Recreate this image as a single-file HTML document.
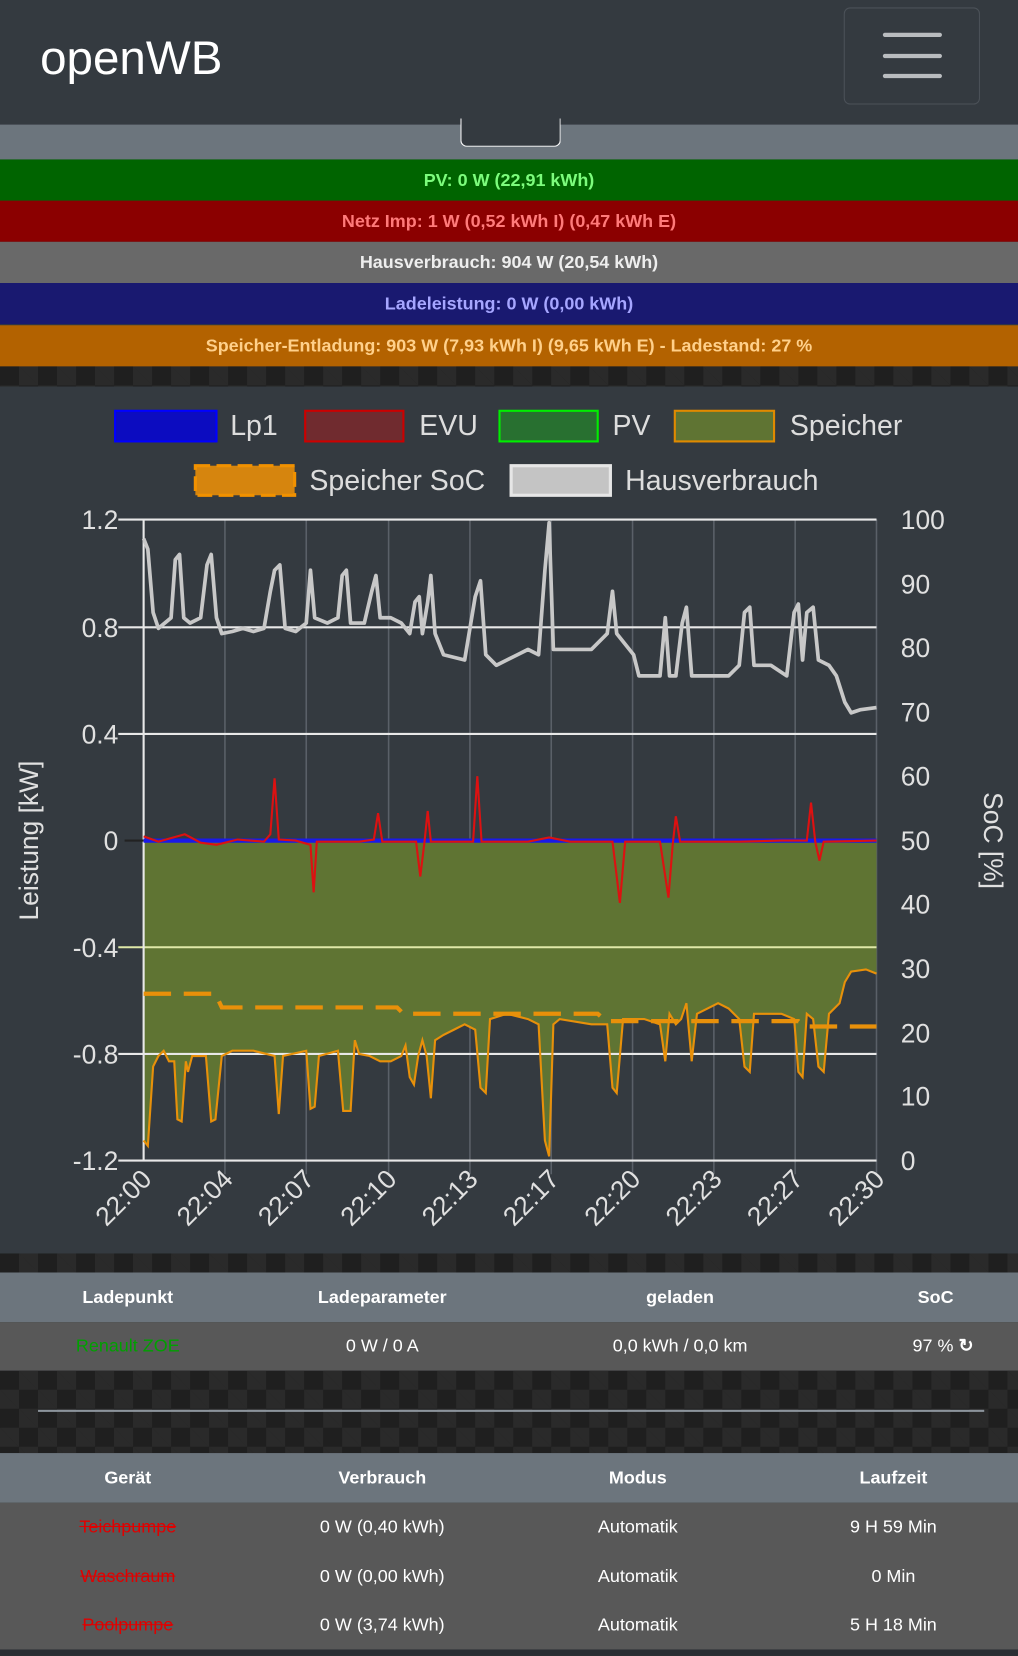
<!DOCTYPE html>
<html><head><meta charset="utf-8">
<style>
html,body{margin:0;padding:0;width:1018px;height:1656px;overflow:hidden;background:#343a40;}
#w{position:absolute;left:0;top:0;width:964px;height:1568px;transform:scale(1.05602);transform-origin:0 0;font-family:"Liberation Sans",sans-serif;}
.abs{position:absolute;left:0;width:964px;}
.bar{position:absolute;left:0;width:964px;text-align:center;font-weight:bold;font-size:17px;line-height:39px;height:39px;}
.carbon{position:absolute;left:0;width:964px;background-color:#1f1f1f;background-image:linear-gradient(45deg,#2a2a2a 25%,transparent 25%,transparent 75%,#2a2a2a 75%),linear-gradient(45deg,#2a2a2a 25%,transparent 25%,transparent 75%,#2a2a2a 75%);background-size:36px 36px;background-position:0 0,18px 18px;}
.row{position:absolute;left:0;width:964px;font-size:17px;color:#fff;}
.row span{position:absolute;transform:translateX(-50%);white-space:nowrap;}
</style></head><body><div id="w">
<div class="abs" style="top:0;height:118px;background:#343a40;"></div>
<div style="position:absolute;left:38px;top:29px;color:#fff;font-size:45px;">openWB</div>
<div style="position:absolute;left:799px;top:7px;width:127px;height:90px;border:1.5px solid #4b5158;border-radius:6px;"></div>
<div style="position:absolute;left:836px;top:31px;width:56px;height:4px;background:#b9bcbf;border-radius:2px;"></div>
<div style="position:absolute;left:836px;top:51px;width:56px;height:4px;background:#b9bcbf;border-radius:2px;"></div>
<div style="position:absolute;left:836px;top:70px;width:56px;height:4px;background:#b9bcbf;border-radius:2px;"></div>
<div class="abs" style="top:118px;height:33px;background:#6c757d;"></div>
<div style="position:absolute;left:436px;top:112px;width:93px;height:26px;background:#343a40;border:1.5px solid #fff;border-top:none;border-radius:0 0 6px 6px;"></div>
<div class="bar" style="top:151px;background:#006400;color:#7cfc7c;">PV: 0 W (22,91 kWh)</div>
<div class="bar" style="top:190px;background:#8b0000;color:#ff7a7a;">Netz Imp: 1 W (0,52 kWh I) (0,47 kWh E)</div>
<div class="bar" style="top:229px;background:#696969;color:#eee;">Hausverbrauch: 904 W (20,54 kWh)</div>
<div class="bar" style="top:268px;background:#191970;color:#a6a6ff;">Ladeleistung: 0 W (0,00 kWh)</div>
<div class="bar" style="top:308px;background:#b36200;color:#ffd08a;height:39px;">Speicher-Entladung: 903 W (7,93 kWh I) (9,65 kWh E) - Ladestand: 27 %</div>
<div class="carbon" style="top:347px;height:19px;"></div>
<svg style="position:absolute;left:0;top:0" width="964" height="1568" font-family="Liberation Sans, sans-serif">
<rect x="0" y="366" width="964" height="821" fill="#343a40"/>
<g font-size="27" fill="#ddd">
<rect x="109" y="389" width="96" height="29" fill="#0c0cc0" stroke="#0000ff" stroke-width="2"/><text x="218" y="412">Lp1</text>
<rect x="289" y="389" width="93" height="29" fill="#702b2f" stroke="#cc0000" stroke-width="2"/><text x="397" y="412">EVU</text>
<rect x="473" y="389" width="93" height="29" fill="#287030" stroke="#00ee00" stroke-width="2"/><text x="580" y="412">PV</text>
<rect x="639" y="389" width="94" height="29" fill="#5f7433" stroke="#e08a00" stroke-width="2"/><text x="748" y="412">Speicher</text>
<rect x="185" y="441" width="94" height="28" fill="#d6850e" stroke="#f19100" stroke-width="3" stroke-dasharray="14 6"/><text x="293" y="464">Speicher SoC</text>
<rect x="484" y="441" width="94" height="28" fill="#c4c4c4" stroke="#e6e6e6" stroke-width="3"/><text x="592" y="464">Hausverbrauch</text>
</g>
<g stroke="#5a6068" stroke-width="1.5">
<line x1="213" y1="492" x2="213" y2="1112"/><line x1="290" y1="492" x2="290" y2="1112"/><line x1="368" y1="492" x2="368" y2="1112"/><line x1="445" y1="492" x2="445" y2="1112"/><line x1="522" y1="492" x2="522" y2="1112"/><line x1="599" y1="492" x2="599" y2="1112"/><line x1="676" y1="492" x2="676" y2="1112"/><line x1="753" y1="492" x2="753" y2="1112"/><line x1="830" y1="492" x2="830" y2="1112"/>
</g>
<polygon fill="#5f7433" points="136,796 136,1080 140,1085 145,1010 150,1000 155,995 160,1005 165,1005 168,1060 172,1062 176,1005 178,1015 182,1000 195,1000 200,1062 204,1060 210,1000 220,995 240,995 260,1000 264,1055 268,1000 290,995 294,1050 298,1048 302,1000 320,995 325,1052 332,1052 336,985 340,998 350,1000 360,1005 370,1005 380,1000 384,990 388,1020 392,1027 396,1000 400,985 404,1000 408,1040 412,985 420,980 430,975 440,970 450,975 455,1030 460,1035 464,965 480,960 500,965 510,970 516,1080 520,1095 524,970 530,965 560,970 575,970 580,1030 584,1035 590,965 610,965 625,970 630,1005 634,960 640,970 645,965 650,950 655,1005 660,960 680,950 690,955 700,965 705,1010 710,1015 714,960 740,960 752,965 756,1015 760,1020 764,960 770,965 775,1010 780,1015 785,960 795,950 800,930 806,920 820,918 830,922 830,796"/>
<g stroke="#e8e8e8" stroke-width="2">
<line x1="112" y1="492" x2="830" y2="492"/><line x1="112" y1="594" x2="830" y2="594"/><line x1="112" y1="695" x2="830" y2="695"/>
<line x1="112" y1="897" x2="830" y2="897" stroke="#dfe8a8"/><line x1="112" y1="998" x2="830" y2="998"/><line x1="112" y1="1099" x2="830" y2="1099"/>
<line x1="136" y1="492" x2="136" y2="1099"/>
</g>
<line x1="118" y1="796" x2="136" y2="796" stroke="#222" stroke-width="2"/>
<polyline fill="none" stroke="#e8900a" stroke-width="2" points="136,1080 140,1085 145,1010 150,1000 155,995 160,1005 165,1005 168,1060 172,1062 176,1005 178,1015 182,1000 195,1000 200,1062 204,1060 210,1000 220,995 240,995 260,1000 264,1055 268,1000 290,995 294,1050 298,1048 302,1000 320,995 325,1052 332,1052 336,985 340,998 350,1000 360,1005 370,1005 380,1000 384,990 388,1020 392,1027 396,1000 400,985 404,1000 408,1040 412,985 420,980 430,975 440,970 450,975 455,1030 460,1035 464,965 480,960 500,965 510,970 516,1080 520,1095 524,970 530,965 560,970 575,970 580,1030 584,1035 590,965 610,965 625,970 630,1005 634,960 640,970 645,965 650,950 655,1005 660,960 680,950 690,955 700,965 705,1010 710,1015 714,960 740,960 752,965 756,1015 760,1020 764,960 770,965 775,1010 780,1015 785,960 795,950 800,930 806,920 820,918 830,922"/>
<polyline fill="none" stroke="#e8900a" stroke-width="4" stroke-dasharray="26 12" points="136,941 204,941 210,954 376,954 382,960 566,960 574,967 756,967 762,972 830,972"/>
<polyline fill="none" stroke="#c8c8c8" stroke-width="3.5" stroke-linejoin="round" points="136,510 140,520 145,580 150,595 156,590 162,585 166,530 170,525 174,585 180,590 190,585 196,535 200,525 205,585 210,600 220,598 230,595 240,598 250,595 256,560 260,540 265,535 270,595 280,598 290,590 294,540 298,585 310,590 320,585 324,545 328,540 332,590 345,590 352,560 356,545 360,585 370,585 380,590 388,600 393,570 397,565 400,600 405,570 408,545 412,600 420,620 440,625 450,565 455,550 460,620 470,630 480,625 490,620 500,615 510,620 516,540 520,495 524,615 540,615 560,615 575,600 580,560 584,600 600,620 605,640 615,640 625,640 630,585 634,640 640,640 646,590 650,575 655,640 670,640 690,640 700,630 705,580 710,575 714,630 730,630 745,640 752,580 756,572 760,625 764,580 770,575 775,625 785,630 792,640 800,665 806,675 815,672 830,670"/>
<line x1="136" y1="796" x2="830" y2="796" stroke="#1a1ae8" stroke-width="4"/>
<polyline fill="none" stroke="#dd1111" stroke-width="2" points="136,792 150,797 175,790 190,798 205,800 225,795 250,797 256,790 260,737 264,795 280,796 294,800 297,845 300,797 340,797 354,795 358,770 362,797 394,797 398,830 402,797 405,768 408,797 448,797 452,735 456,797 500,797 520,793 540,797 580,797 587,855 592,797 625,797 633,850 637,800 640,773 644,797 700,797 740,796 764,796 768,760 772,797 776,815 780,797 830,796"/>
<g font-size="25" fill="#e0e0e0" text-anchor="end">
<text x="112" y="501">1.2</text><text x="112" y="603">0.8</text><text x="112" y="704">0.4</text><text x="112" y="805">0</text><text x="112" y="906">-0.4</text><text x="112" y="1007">-0.8</text><text x="112" y="1108">-1.2</text>
</g>
<g font-size="25" fill="#e0e0e0">
<text x="853" y="501">100</text><text x="853" y="562">90</text><text x="853" y="622">80</text><text x="853" y="683">70</text><text x="853" y="744">60</text><text x="853" y="805">50</text><text x="853" y="865">40</text><text x="853" y="926">30</text><text x="853" y="987">20</text><text x="853" y="1047">10</text><text x="853" y="1108">0</text>
</g>
<text transform="translate(36,796) rotate(-90)" font-size="25" fill="#e0e0e0" text-anchor="middle">Leistung [kW]</text>
<text transform="translate(932,796) rotate(90)" font-size="25" fill="#e0e0e0" text-anchor="middle">SoC [%]</text>
<g font-size="25" fill="#e0e0e0" text-anchor="end">
<text transform="translate(145,1118) rotate(-45)">22:00</text>
<text transform="translate(222,1118) rotate(-45)">22:04</text>
<text transform="translate(299,1118) rotate(-45)">22:07</text>
<text transform="translate(377,1118) rotate(-45)">22:10</text>
<text transform="translate(454,1118) rotate(-45)">22:13</text>
<text transform="translate(531,1118) rotate(-45)">22:17</text>
<text transform="translate(608,1118) rotate(-45)">22:20</text>
<text transform="translate(685,1118) rotate(-45)">22:23</text>
<text transform="translate(762,1118) rotate(-45)">22:27</text>
<text transform="translate(839,1118) rotate(-45)">22:30</text>
</g>
</svg>
<div class="carbon" style="top:1187px;height:18px;"></div>
<div class="row" style="top:1205px;height:47px;background:#6c757d;font-weight:bold;line-height:47px;"><span style="left:121px">Ladepunkt</span><span style="left:362px">Ladeparameter</span><span style="left:644px">geladen</span><span style="left:886px">SoC</span></div>
<div class="row" style="top:1252px;height:46px;background:#585858;line-height:46px;"><span style="left:121px;color:#00a000">Renault ZOE</span><span style="left:362px">0 W / 0 A</span><span style="left:644px">0,0 kWh / 0,0 km</span><span style="left:893px">97 % <b>&#x21BB;</b></span></div>
<div class="carbon" style="top:1298px;height:78px;"></div>
<div style="position:absolute;left:36px;top:1335px;width:896px;height:2px;background:#8c949c;"></div>
<div class="row" style="top:1376px;height:47px;background:#6c757d;font-weight:bold;line-height:47px;"><span style="left:121px">Gerät</span><span style="left:362px">Verbrauch</span><span style="left:604px">Modus</span><span style="left:846px">Laufzeit</span></div>
<div class="row" style="top:1423px;height:139px;background:#585858;line-height:46.5px;">
<div style="position:absolute;top:0;left:0;width:964px;height:46px"><span style="left:121px;color:#e00000;text-decoration:line-through">Teichpumpe</span><span style="left:362px">0 W (0,40 kWh)</span><span style="left:604px">Automatik</span><span style="left:846px">9 H 59 Min</span></div>
<div style="position:absolute;top:46.5px;left:0;width:964px;height:46px"><span style="left:121px;color:#e00000;text-decoration:line-through">Waschraum</span><span style="left:362px">0 W (0,00 kWh)</span><span style="left:604px">Automatik</span><span style="left:846px">0 Min</span></div>
<div style="position:absolute;top:93px;left:0;width:964px;height:46px"><span style="left:121px;color:#e00000;text-decoration:line-through">Poolpumpe</span><span style="left:362px">0 W (3,74 kWh)</span><span style="left:604px">Automatik</span><span style="left:846px">5 H 18 Min</span></div>
</div>
<div class="abs" style="top:1562px;height:6px;background:#2a2e33;"></div>
</div></body></html>
